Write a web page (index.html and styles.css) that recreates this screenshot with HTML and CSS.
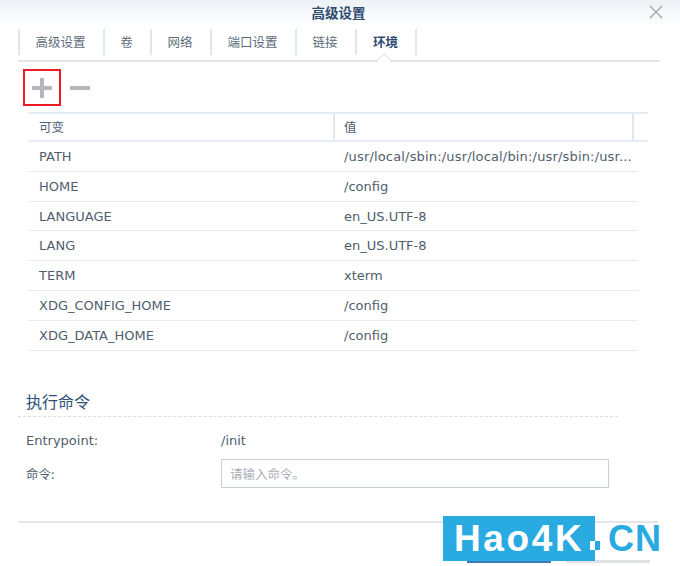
FILE: index.html
```html
<!DOCTYPE html>
<html lang="zh">
<head>
<meta charset="utf-8">
<title>高级设置</title>
<link rel="stylesheet" href="styles.css">
</head>
<body>
<div class="dialog">
  <header class="titlebar">
    <h1 class="title">高级设置</h1>
    <svg class="close" width="14" height="14" viewBox="0 0 14 14"><path d="M1 1L13 13M13 1L1 13" stroke="#a9aeb4" stroke-width="1.6" fill="none"/></svg>
  </header>
  <nav class="tabs">
    <span class="tab t1">高级设置</span>
    <span class="tab t2">卷</span>
    <span class="tab t3">网络</span>
    <span class="tab t4">端口设置</span>
    <span class="tab t5">链接</span>
    <span class="tab t6 active">环境</span>
  </nav>
  <div class="tabline"></div>
  <div class="toolbar">
    <span class="tool add"><svg width="24" height="24" viewBox="0 0 24 24"><path d="M2 12H22M12 2V22" stroke="#b4b7bb" stroke-width="4" fill="none"/></svg></span>
    <span class="tool remove"><svg width="24" height="24" viewBox="0 0 24 24"><path d="M2 12H22" stroke="#b4b7bb" stroke-width="4" fill="none"/></svg></span>
  </div>
  <div class="grid">
    <div class="ghead">
      <div class="hc c1">可变</div>
      <div class="hc c2">值</div>
      <div class="hc c3"></div>
    </div>
    <div class="row"><div class="c1 cell">PATH</div><div class="c2 cell long">/usr/local/sbin:/usr/local/bin:/usr/sbin:/usr...</div></div>
    <div class="row"><div class="c1 cell">HOME</div><div class="c2 cell">/config</div></div>
    <div class="row"><div class="c1 cell">LANGUAGE</div><div class="c2 cell">en_US.UTF-8</div></div>
    <div class="row"><div class="c1 cell">LANG</div><div class="c2 cell">en_US.UTF-8</div></div>
    <div class="row"><div class="c1 cell">TERM</div><div class="c2 cell">xterm</div></div>
    <div class="row"><div class="c1 cell">XDG_CONFIG_HOME</div><div class="c2 cell">/config</div></div>
    <div class="row"><div class="c1 cell">XDG_DATA_HOME</div><div class="c2 cell">/config</div></div>
  </div>
  <h2 class="section">执行命令</h2>
  <div class="form-row entry"><span class="label">Entrypoint:</span><span class="value">/init</span></div>
  <div class="form-row cmd"><span class="label">命令:</span><input class="input" type="text" placeholder="请输入命令。"></div>
  <div class="footline"></div>
  <div class="buttons"><span class="btn primary"></span><span class="btn plain"></span></div>
</div>
<div class="watermark"><span class="wm-box">Hao4K</span><span class="wm-dot"></span><span class="wm-cn">CN</span></div>
</body>
</html>
```

FILE: styles.css
```css
* { box-sizing: border-box; }
html, body { margin: 0; padding: 0; }
body {
  width: 680px; height: 566px; overflow: hidden; background: #fff; position: relative;
  font-family: "DejaVu Sans", "Noto Sans CJK SC", sans-serif;
  font-size: 13px; color: #4f5e6c;
}
.dialog { width: 680px; height: 566px; overflow: hidden; }
.titlebar {
  height: 28px; position: relative; display: flex; justify-content: center; align-items: center;
  padding-right: 3px;
  background: linear-gradient(#eef1f5, #ffffff);
}
.title { margin: 0; font-size: 13.5px; font-weight: 700; color: #2d4a70; line-height: 24px; padding-bottom: 3px; }
.close { position: absolute; left: 649px; top: 5px; }
.tabs { display: flex; margin-left: 18px; height: 26px; margin-top: 1px; width: 400px; }
.tab {
  border-left: 2px solid #dde5ee; text-align: center; line-height: 25px; font-size: 12.5px; color: #5c6b7a;
  font-family: "Noto Sans CJK SC", sans-serif; padding-right: 2px;
}
.t1 { width: 85px; } .t2 { width: 47px; } .t3 { width: 60px; } .t4 { width: 85px; } .t5 { width: 60px; }
.t6 { width: 62px; border-right: 2px solid #dde5ee; padding-right: 1px; }
.tab.active { font-weight: 700; color: #2d4a70; position: relative; }
.tabline { height: 2px; margin: 5px 20px 0 18px; background: #e4e5e7; position: relative; }
.tabline::after {
  content: ""; position: absolute; left: 361px; top: -5px; width: 9px; height: 9px; background: #fff;
  border-left: 1.5px solid #e4e5e7; border-top: 1.5px solid #e4e5e7; transform: rotate(45deg);
}
.toolbar { display: flex; height: 50px; padding: 7px 0 0 23px; gap: 0; }
.tool { width: 38px; height: 37px; display: flex; align-items: center; justify-content: center; }
.add { border: 2px solid #ed1c24; }
.remove { width: 38px; }
.grid { margin-left: 28px; width: 620px; }
.ghead { display: flex; height: 30px; border-top: 2px solid #e3ebf4; border-bottom: 2px solid #e6edf5; color: #4f6072; }
.hc { line-height: 25px; font-family: "Noto Sans CJK SC", sans-serif; font-size: 12.5px; border-right: 2px solid #dfe8f2; }
.c1 { width: 307px; padding-left: 11px; flex: none; }
.c2 { width: 299px; padding-left: 9px; flex: none; }
.c3 { flex: 1; border-right: 0; }
.row { display: flex; height: 29.8px; width: 610px; border-bottom: 1px solid #e6ebf2; }
.cell { line-height: 30px; white-space: nowrap; }
.long { letter-spacing: 0.17px; }
.section {
  margin: 38px 62px 0 18px; padding: 0 0 3px 8px; height: 28px; font-size: 16px; font-weight: 400; color: #2d4f78;
  line-height: 24px; border-bottom: 1px dashed #d5dfe9; font-family: "Noto Sans CJK SC", sans-serif;
}
.form-row { display: flex; align-items: center; padding-left: 26px; }
.label { width: 195px; flex: none; }
.entry { height: 24px; margin-top: 12px; }
.cmd { height: 30px; margin-top: 6px; }
.cmd .label { font-family: "Noto Sans CJK SC", sans-serif; font-size: 12.5px; }
.input {
  width: 388px; height: 29px; border: 1px solid #c6cfda; outline: 0; padding: 0 8px;
  font: 12.5px "Noto Sans CJK SC", sans-serif; background: #fff;
}
.input::placeholder { color: #a9b0b8; opacity: 1; }
.footline { height: 2px; margin: 32px 0 0 18px; width: 640px; background: #e6e6e8; }
.buttons { display: flex; margin: 37px 0 0 467px; gap: 15px; }
.btn { height: 3px; width: 84px; }
.primary { background: #3d78b8; }
.plain { background: #dfe2e6; }
.watermark {
  position: absolute; left: 443px; top: 516px; height: 45px; display: flex; align-items: flex-start;
  font-family: "Liberation Sans", sans-serif; font-size: 37px; line-height: 45px; font-weight: 700;
}
.wm-box { width: 152px; height: 45px; background: #29abe2; color: #fff; padding-left: 11px; letter-spacing: 2.6px; white-space: nowrap; }
.wm-dot { width: 10px; height: 9px; margin-top: 25px; margin-left: -5px; background: #29abe2; border-left: 5px solid #fff; }
.wm-cn { color: #29abe2; margin-left: 8px; letter-spacing: 1px; font-size: 36px; }
```
